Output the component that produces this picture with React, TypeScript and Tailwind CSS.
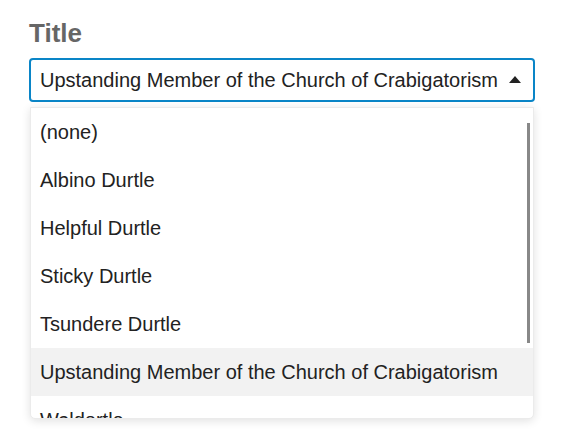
import React from 'react';

const options = [
  '(none)',
  'Albino Durtle',
  'Helpful Durtle',
  'Sticky Durtle',
  'Tsundere Durtle',
  'Upstanding Member of the Church of Crabigatorism',
  'Waldortle',
];

const selected = 'Upstanding Member of the Church of Crabigatorism';

const App: React.FC = () => {
  return (
    <div className="min-h-screen bg-white px-[29px] pt-[18px] font-['Liberation_Sans',Arial,sans-serif]">
      <div className="text-[26px] font-bold leading-[30px] text-[#666666]">Title</div>
      <div className="mt-[10px] w-[506px]">
        {/* select trigger */}
        <div className="flex h-[44px] items-center justify-between rounded-[4px] border-2 border-[#0a85c7] pl-[9px] pr-[12px] text-[20px] text-[#222222]">
          <span>{selected}</span>
          <svg width="12" height="7" viewBox="0 0 12 7" className="mb-[1px]">
            <path d="M0 7 L6 0 L12 7 Z" fill="#222222" />
          </svg>
        </div>
        {/* dropdown list */}
        <div className="relative mx-[1px] mt-[5px] h-[312px] overflow-hidden rounded-b-[5px] border border-[#ebebeb] bg-white shadow-[0_2px_10px_rgba(0,0,0,0.12)]">
          {options.map((o) => (
            <div
              key={o}
              className={
                'flex h-[48px] items-center pl-[9px] text-[20px] text-[#222222] ' +
                (o === selected ? 'bg-[#f2f2f2]' : '')
              }
            >
              {o}
            </div>
          ))}
          <div className="absolute right-[3px] top-[15px] h-[220px] w-[3px] bg-[#888888]" />
        </div>
      </div>
    </div>
  );
};

export default App;
